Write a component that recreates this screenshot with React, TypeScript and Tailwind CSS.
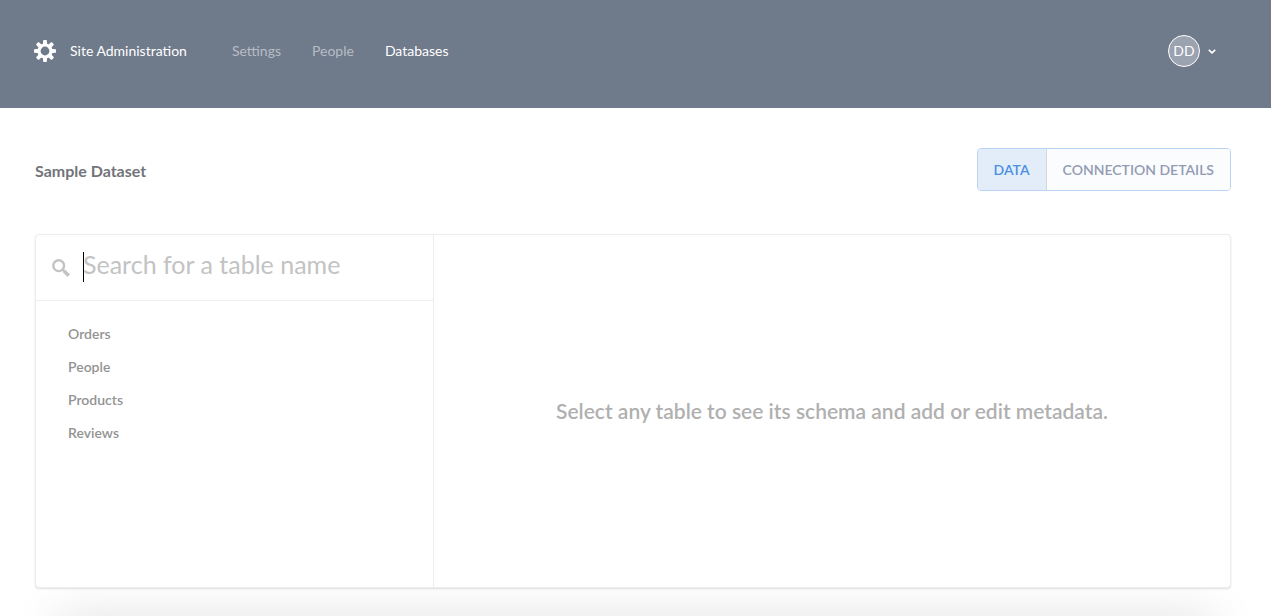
import React from "react";

const navItems = [
  { label: "Settings", active: false },
  { label: "People", active: false },
  { label: "Databases", active: true },
];

const tables = ["Orders", "People", "Products", "Reviews"];

function GearIcon() {
  return (
    <svg className="size-6" viewBox="0 0 24 24" fill="currentColor" aria-hidden="true">
      {[0, 45, 90, 135, 180, 225, 270, 315].map((angle) => (
        <path key={angle} d="M10.2 1.6q0-.6.6-.6h2.4q.6 0 .6.6l.4 4.4h-4.4z" transform={`rotate(${angle} 12 12)`} />
      ))}
      <circle cx="12" cy="12" r="6" fill="none" stroke="currentColor" strokeWidth="3.2" />
    </svg>
  );
}

function SearchIcon() {
  return (
    <svg className="size-[18px] shrink-0" viewBox="0 0 18 18" fill="none" stroke="currentColor" aria-hidden="true">
      <circle cx="6.7" cy="6.7" r="5.4" strokeWidth="2.4" />
      <path d="M10.4 10.4l1.8 1.8" strokeWidth="2.4" />
      <path d="M11.8 11.8l5 4.8" strokeWidth="3.6" />
    </svg>
  );
}

function Header() {
  return (
    <header className="flex h-[108px] items-start bg-[#6f7a8b] pt-[35px] pr-[54px] pl-[33px] text-sm text-white">
      <div className="flex h-8 items-center gap-[13px]">
        <GearIcon />
        <span>Site Administration</span>
      </div>
      <nav className="ml-[45px] flex h-8 items-center gap-[31px]">
        {navItems.map((item) => (
          <a key={item.label} href="#" className={item.active ? "text-white" : "text-[#b7bdc5]"}>
            {item.label}
          </a>
        ))}
      </nav>
      <button type="button" aria-label="Account menu" className="ml-auto flex items-center gap-[7px]">
        <span className="flex size-8 items-center justify-center rounded-full border border-white bg-[#9ba2b0]">
          DD
        </span>
        <svg className="size-[10px]" viewBox="0 0 10 10" fill="none" stroke="currentColor" strokeWidth="1.7" aria-hidden="true">
          <path d="M1.8 3.8L5 6.8l3.2-3" />
        </svg>
      </button>
    </header>
  );
}

export default function App() {
  return (
    <div className="relative flex min-h-screen flex-col overflow-hidden bg-white font-['Lato',sans-serif]">
      <Header />
      <main className="flex flex-1 flex-col pt-10 pr-10 pb-7 pl-[35px]">
        <div className="flex items-center justify-between">
          <h1 className="pt-0.5 text-base font-bold text-[#727479]">Sample Dataset</h1>
          <div className="flex h-[43px] overflow-hidden rounded border border-[#b9d3f3] text-sm font-semibold">
            <button type="button" className="border-r border-[#d4d8dd] bg-[#e3edf9] px-4 text-[#4a90e2]">
              DATA
            </button>
            <button type="button" className="bg-[#fbfcfe] px-4 text-[#929bb3]">
              CONNECTION DETAILS
            </button>
          </div>
        </div>

        <div className="relative z-10 mt-[43px] flex flex-1 rounded border border-[#ededed] bg-white shadow-[0_1px_2px_rgba(0,0,0,0.12)]">
          <section className="w-1/3 border-r border-[#ededed]">
            <label className="flex h-[66px] items-center gap-[13px] border-b border-[#ededed] px-4 text-[#c3c3c3]">
              <SearchIcon />
              <span className="relative flex-1">
                <input
                  type="text"
                  aria-label="Search for a table name"
                  placeholder="Search for a table name"
                  className="block w-full pb-2 text-[25px] leading-7 text-[#5f6168] outline-none placeholder:text-[#c3c3c3]"
                />
                <span className="absolute top-0.5 left-0 h-[30px] w-px bg-black" />
              </span>
            </label>
            <ul className="py-4">
              {tables.map((name) => (
                <li key={name}>
                  <a href="#" className="block px-8 text-sm leading-[33px] font-semibold text-[#939393]">
                    {name}
                  </a>
                </li>
              ))}
            </ul>
          </section>
          <section className="flex flex-1 items-center justify-center">
            <h2 className="text-[21px] font-semibold text-[#b0b0b0]">
              Select any table to see its schema and add or edit metadata.
            </h2>
          </section>
        </div>
      </main>
      <div className="absolute inset-x-14 -bottom-10 h-10 shadow-[0_0_48px_rgba(0,0,0,0.12)]" />
    </div>
  );
}
